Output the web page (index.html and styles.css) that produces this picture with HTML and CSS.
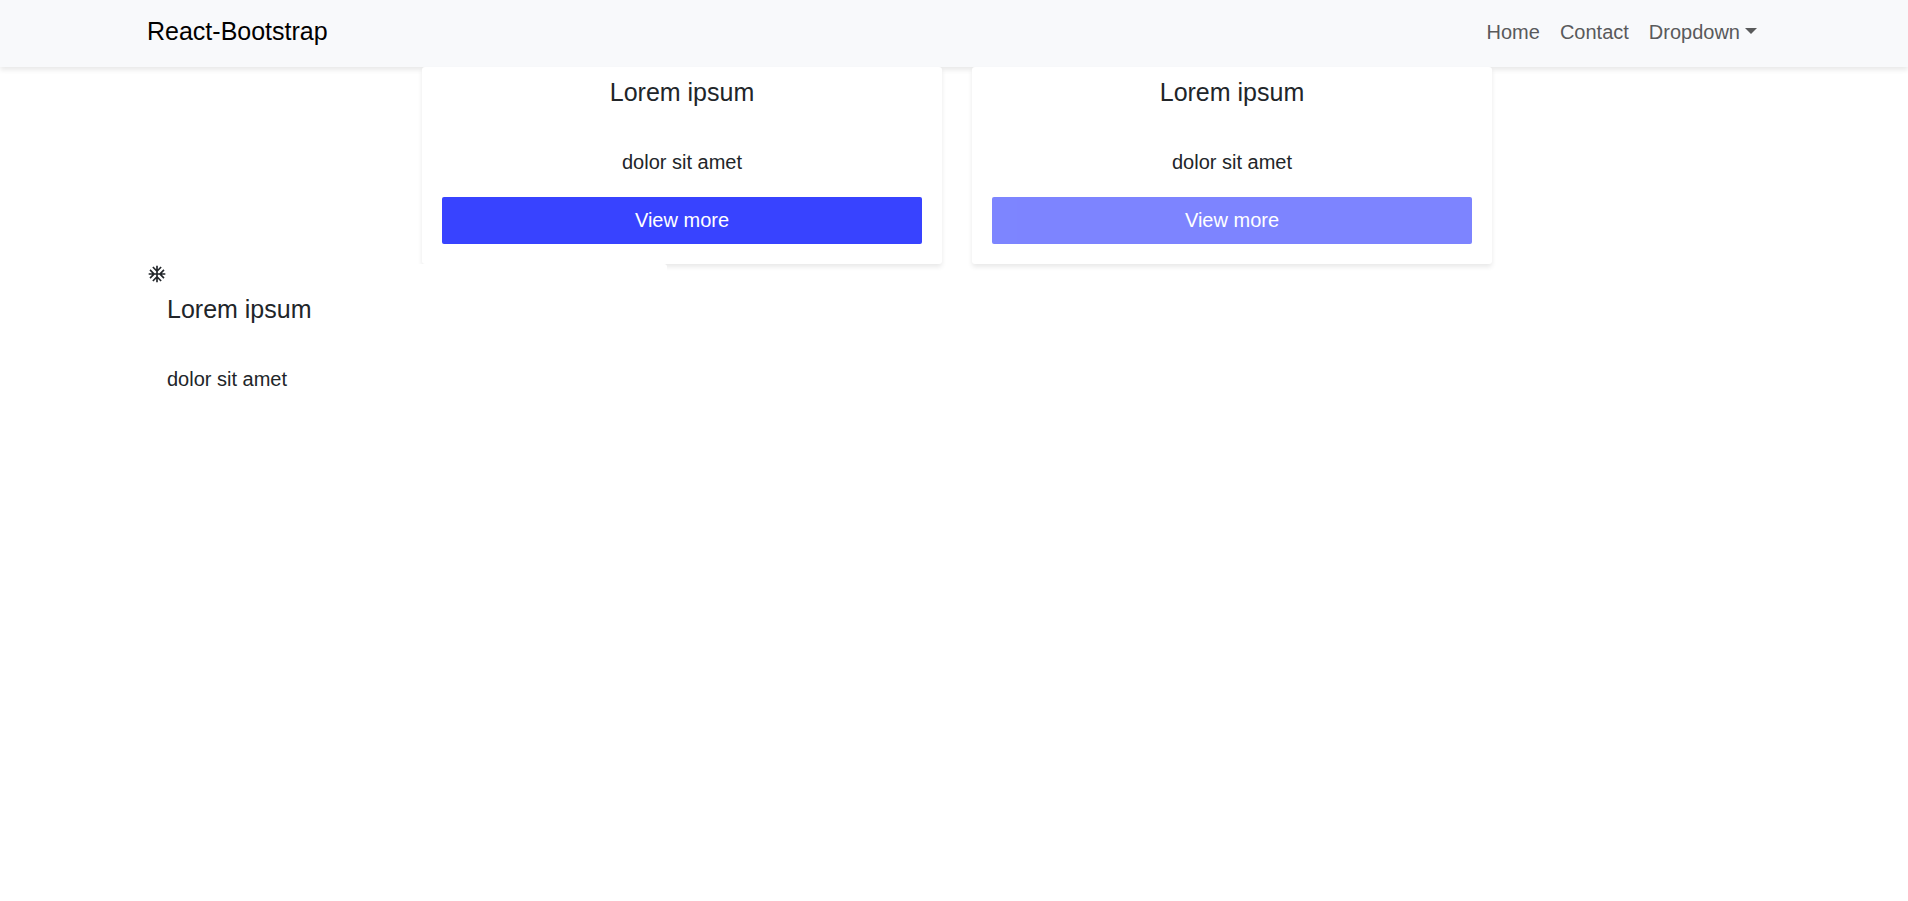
FILE: index.html
```html
<!DOCTYPE html>
<html lang="en">
<head>
  <meta charset="utf-8">
  <meta name="viewport" content="width=device-width, initial-scale=1">
  <title>React-Bootstrap</title>
  <link rel="stylesheet" href="styles.css">
</head>
<body>
  <header class="navbar">
    <div class="container navbar-inner">
      <a class="brand" href="#home">React-Bootstrap</a>
      <nav class="nav">
        <a class="nav-link" href="#home">Home</a>
        <a class="nav-link" href="#contact">Contact</a>
        <button class="nav-link dropdown-toggle" type="button" aria-haspopup="true" aria-expanded="false">Dropdown</button>
      </nav>
    </div>
  </header>
  <main class="container">
    <div class="card-row">
      <article class="card">
        <h2 class="card-title">Lorem ipsum</h2>
        <p class="card-text">dolor sit amet</p>
        <button class="btn" type="button">View more</button>
      </article>
      <article class="card">
        <h2 class="card-title">Lorem ipsum</h2>
        <p class="card-text">dolor sit amet</p>
        <button class="btn" type="button" disabled>View more</button>
      </article>
    </div>
    <article class="card card-plain">
      <svg class="card-icon" viewBox="0 0 24 24" aria-hidden="true"><path d="M22 11h-4.17l3.24-3.24-1.41-1.42L15 11h-2V9l4.66-4.66-1.42-1.41L13 6.17V2h-2v4.17L7.76 2.93 6.34 4.34 11 9v2H9L4.34 6.34 2.93 7.76 6.17 11H2v2h4.17l-3.24 3.24 1.41 1.42L9 13h2v2l-4.66 4.66 1.42 1.41L11 17.83V22h2v-4.17l3.24 3.24 1.42-1.41L13 15v-2h2l4.66 4.66 1.41-1.42L17.83 13H22v-2z"/></svg>
      <div class="card-body">
        <h2 class="card-title">Lorem ipsum</h2>
        <p class="card-text">dolor sit amet</p>
      </div>
    </article>
  </main>
</body>
</html>
```

FILE: styles.css
```css
* {
  box-sizing: border-box;
}

body {
  margin: 0;
  background: #fff;
  color: #212529;
  font-family: "Liberation Sans", Arial, sans-serif;
  font-size: 20px;
  line-height: 30px;
}

.container {
  padding: 0 141px 0 147px;
}

.navbar {
  padding: 15px 0 20px;
  background: #f8f9fb;
  box-shadow: 0 3px 5px rgba(0, 0, 0, 0.09);
}

.navbar-inner {
  display: flex;
  align-items: center;
  justify-content: space-between;
}

.brand {
  color: #000;
  font-size: 25px;
  text-decoration: none;
}

.nav {
  display: flex;
  padding-top: 2px;
}

.nav-link {
  padding: 0 10px;
  border: 0;
  background: none;
  color: #595a5b;
  font: inherit;
  text-decoration: none;
}

.dropdown-toggle::after {
  content: "";
  display: inline-block;
  margin-left: 5px;
  vertical-align: 5px;
  border-top: 6px solid;
  border-right: 6px solid transparent;
  border-left: 6px solid transparent;
}

.card-row {
  display: flex;
  justify-content: center;
  gap: 30px;
}

.card {
  position: relative;
  width: calc((100% - 60px) / 3);
  padding: 10px 20px 20px;
  border-radius: 3px;
  background: #fff;
  box-shadow: 0 3px 5px rgba(0, 0, 0, 0.09);
  text-align: center;
}

.card-title {
  margin: 0 0 40px;
  font-size: 25px;
  font-weight: 400;
  line-height: 30px;
}

.card-text {
  margin: 0 0 20px;
}

.btn {
  display: block;
  width: 100%;
  padding: 8px 15px;
  border: 0;
  border-radius: 2px;
  background: #3843ff;
  color: #fff;
  font: inherit;
  line-height: 31px;
}

.btn:disabled {
  opacity: 0.65;
}

.card-plain {
  padding: 0;
  box-shadow: none;
  text-align: left;
}

.card-icon {
  display: block;
  width: 20px;
  height: 20px;
  fill: currentColor;
}

.card-body {
  padding: 10px 20px;
}
```
